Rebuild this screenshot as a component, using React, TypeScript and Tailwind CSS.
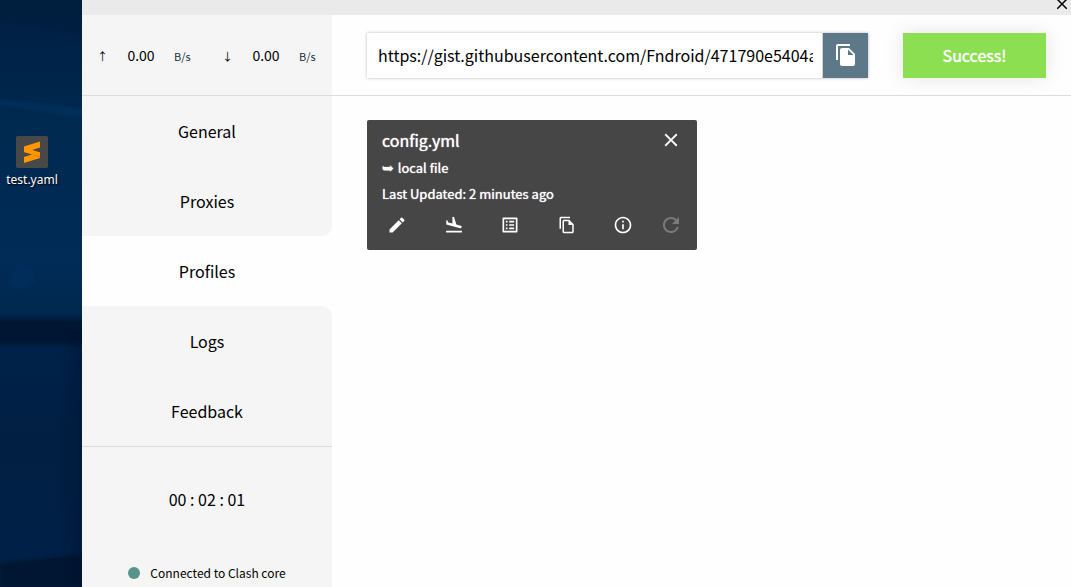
import { useState } from "react";
import {
  MdClose,
  MdEdit,
  MdFileCopy,
  MdFlightLand,
  MdInfoOutline,
  MdListAlt,
  MdOutlineFileCopy,
  MdRefresh,
} from "react-icons/md";

const navItems = ["General", "Proxies", "Profiles", "Logs", "Feedback"];

const cardActions = [
  { label: "Edit", Icon: MdEdit, size: "size-5" },
  { label: "Load", Icon: MdFlightLand, size: "size-5" },
  { label: "Rules", Icon: MdListAlt, size: "size-5" },
  { label: "Duplicate", Icon: MdOutlineFileCopy, size: "size-[18px]" },
  { label: "Info", Icon: MdInfoOutline, size: "size-5" },
];

function Wallpaper() {
  return (
    <svg
      className="absolute inset-0 size-full"
      viewBox="0 0 82 587"
      preserveAspectRatio="none"
      aria-hidden="true"
    >
      <defs>
        <linearGradient id="sky" x1="0" y1="0" x2="0" y2="1">
          <stop offset="0" stopColor="#001f42" />
          <stop offset="0.14" stopColor="#00254b" />
          <stop offset="0.2" stopColor="#00294f" />
          <stop offset="0.45" stopColor="#002c57" />
          <stop offset="0.535" stopColor="#00274e" />
          <stop offset="0.55" stopColor="#001631" />
          <stop offset="0.58" stopColor="#001633" />
          <stop offset="0.595" stopColor="#00224a" />
          <stop offset="0.75" stopColor="#001f42" />
          <stop offset="0.94" stopColor="#002047" />
          <stop offset="1" stopColor="#001f42" />
        </linearGradient>
        <linearGradient id="edge" x1="0" y1="0" x2="1" y2="0">
          <stop offset="0.7" stopColor="#000f2a" stopOpacity="0" />
          <stop offset="1" stopColor="#000f2a" stopOpacity="0.35" />
        </linearGradient>
        <filter id="soft" x="-20%" y="-50%" width="140%" height="200%">
          <feGaussianBlur stdDeviation="1.5" />
        </filter>
      </defs>
      <rect width="82" height="587" fill="url(#sky)" />
      <path d="M0 0H82V36L0 20Z" fill="#001a38" opacity="0.4" filter="url(#soft)" />
      <path d="M-4 99L86 109V116L70 116L-4 104Z" fill="#00325f" opacity="0.7" filter="url(#soft)" />
      <path d="M9 276l7-8 4-5 5 5 8 2 1 14-7 3-5 4-6-3-6-2z" fill="#003263" opacity="0.4" filter="url(#soft)" />
      <path d="M0 563L82 554V587H0Z" fill="#001632" filter="url(#soft)" />
      <rect y="330" width="82" height="257" fill="url(#edge)" />
    </svg>
  );
}

function DesktopFile() {
  return (
    <a
      href="#test"
      className="relative flex w-16 flex-col items-center gap-1 font-['Noto_Sans','Open_Sans',sans-serif] text-[12px] leading-4 text-white [text-shadow:1px_1px_2px_#000]"
    >
      <svg className="size-8" viewBox="0 0 32 32" aria-hidden="true">
        <rect width="32" height="32" rx="2" fill="#484848" />
        <path d="M8 10.5L24 5.5V11.5L16 14L24 16.5V22L8 27V21L16 18.5L8 16Z" fill="#ff9800" />
        <path d="M8 16V12L24 16.5V20Z" fill="#ff9800" />
        <path d="M15 18.5L24 20V21.5Z" fill="#d97e00" />
      </svg>
      test.yaml
    </a>
  );
}

function Speed({ arrow, label }: { arrow: string; label: string }) {
  return (
    <div className="flex items-center" aria-label={label}>
      <span className="w-6 pl-1 pt-0.5 text-[11px]">{arrow}</span>
      <span className="w-12 text-center text-[14px]">0.00</span>
      <span className="w-7 pl-[9px] pt-0.5 text-[11px] text-[#222f3a]">B/s</span>
    </div>
  );
}

export default function App() {
  const [active, setActive] = useState("Profiles");
  const [url, setUrl] = useState(
    "https://gist.githubusercontent.com/Fndroid/471790e5404a",
  );

  return (
    <div className="flex h-screen overflow-hidden bg-[#fefefe] font-['Noto_Sans_CJK_SC',sans-serif] text-black">
      <aside className="relative w-[82px] shrink-0 pt-[136px]">
        <Wallpaper />
        <DesktopFile />
      </aside>

      <div className="flex min-w-0 flex-1 flex-col">
        <div className="flex h-[15px] shrink-0 items-end justify-end bg-[#eaeaea]">
          <button type="button" aria-label="Close window" className="pb-0.5">
            <MdClose className="size-[18px]" />
          </button>
        </div>

        <div className="flex min-h-0 flex-1">
          <div className="flex w-[250px] shrink-0 flex-col">
            <div className="flex h-[81px] shrink-0 items-center justify-between border-b border-[#dcdcdc] bg-[#f5f5f5] pl-[11px] pr-[14px]">
              <Speed arrow="↑" label="Upload speed" />
              <Speed arrow="↓" label="Download speed" />
            </div>
            <nav className="flex shrink-0 flex-col bg-[#fefefe]">
              {navItems.map((item, i) => {
                const current = navItems.indexOf(active);
                const corner =
                  i === current - 1 ? "rounded-br-[10px]" : i === current + 1 ? "rounded-tr-[10px]" : "";
                return (
                  <button
                    key={item}
                    type="button"
                    onClick={() => setActive(item)}
                    className={`h-[70px] text-[16px] ${item === active ? "bg-[#fefefe]" : "bg-[#f5f5f5]"} ${corner}`}
                  >
                    {item}
                  </button>
                );
              })}
            </nav>
            <div className="flex flex-1 flex-col items-center gap-[52px] border-t border-[#dcdcdc] bg-[#f5f5f5] pt-10">
              <div className="text-[16px] leading-6">00 : 02 : 01</div>
              <div className="flex items-center gap-[10px] text-[12px] leading-5">
                <span className="size-3 rounded-full bg-[#57958a]" />
                Connected to Clash core
              </div>
            </div>
          </div>

          <main className="min-w-0 flex-1">
            <div className="flex h-[81px] items-center gap-[35px] border-b border-[#dcdcdc] pl-[35px] pr-[25px]">
              <div className="flex h-[45px] min-w-0 flex-1 shadow-[0_0_3px_#b8b8b8]">
                <input
                  type="text"
                  aria-label="Profile URL"
                  value={url}
                  onChange={(e) => setUrl(e.target.value)}
                  className="min-w-0 flex-1 border-r border-[#d0d0d0] bg-white pl-[11px] pr-[9px] text-[16px] outline-none"
                />
                <button
                  type="button"
                  aria-label="Paste"
                  className="flex w-[45px] items-center justify-center bg-[#5d7888] text-white"
                >
                  <MdFileCopy className="size-6" />
                </button>
              </div>
              <button
                type="button"
                className="h-[45px] w-[143px] shrink-0 bg-[#8bdf50] text-[16px] text-white shadow-[0_0_20px_rgba(0,0,0,0.1)] [text-shadow:0_0_1px_#fff]"
              >
                Success!
              </button>
            </div>

            <section className="px-[35px] pt-6">
              <article className="w-[330px] rounded-[2px] bg-[#464646] pb-2 pl-[15px] pr-[14px] pt-2 text-white [text-shadow:0_0_1px_#fff]">
                <div className="flex items-center justify-between pr-px">
                  <h2 className="text-[16px] leading-6">config.yml</h2>
                  <button type="button" aria-label="Delete profile">
                    <MdClose className="size-[22px]" />
                  </button>
                </div>
                <p className="flex items-center gap-1 pt-1 text-[13px] leading-6">
                  <span className="font-['DejaVu_Sans',sans-serif] text-[14px]">➥</span>
                  local file
                </p>
                <p className="text-[13px] leading-7">Last Updated: 2 minutes ago</p>
                <div className="flex h-[34px] items-center gap-[21px]">
                  <div className="flex flex-1 items-center justify-between">
                    {cardActions.map(({ label, Icon, size }) => (
                      <button
                        key={label}
                        type="button"
                        aria-label={label}
                        className="flex w-[30px] justify-center"
                      >
                        <Icon className={size} />
                      </button>
                    ))}
                  </div>
                  <button type="button" aria-label="Refresh" className="text-[#7a7a7a]">
                    <MdRefresh className="size-6" />
                  </button>
                </div>
              </article>
            </section>
          </main>
        </div>
      </div>
    </div>
  );
}
